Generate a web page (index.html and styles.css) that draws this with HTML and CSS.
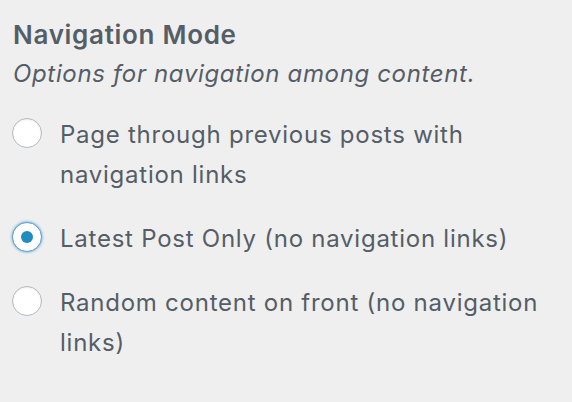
FILE: index.html
```html
<!DOCTYPE html>
<html lang="en">
<head>
<meta charset="utf-8">
<title>Navigation Mode</title>
<link rel="stylesheet" href="styles.css">
</head>
<body>
<div class="control">
  <span class="control-title">Navigation Mode</span>
  <span class="description">Options for navigation among content.</span>
  <div class="options">
    <label class="option">
      <input type="radio" name="nav" class="radio">
      <span class="label-text">Page through previous posts with navigation links</span>
    </label>
    <label class="option">
      <input type="radio" name="nav" class="radio" checked>
      <span class="label-text">Latest Post Only (no navigation links)</span>
    </label>
    <label class="option">
      <input type="radio" name="nav" class="radio">
      <span class="label-text">Random content on front (no navigation links)</span>
    </label>
  </div>
</div>
</body>
</html>
```

FILE: styles.css
```css
html, body {
  margin: 0;
  padding: 0;
  background: #efefef;
}

body {
  font-family: Inter, "Open Sans", "Liberation Sans", sans-serif;
  color: #555d66;
}

.control {
  display: flex;
  flex-direction: column;
  padding: 18px 30px 0 12px;
}

.control-title {
  display: block;
  font-size: 26px;
  font-weight: 600;
  letter-spacing: 0.7px;
  line-height: 34px;
  padding-left: 1px;
}

.description {
  display: block;
  font-size: 24px;
  font-style: italic;
  letter-spacing: 0.65px;
  line-height: 34px;
  margin-top: 5px;
  padding-left: 1px;
}

.options {
  display: flex;
  flex-direction: column;
  gap: 24px;
  margin-top: 24px;
}

.option {
  display: flex;
  align-items: flex-start;
  gap: 18px;
  font-size: 24px;
  letter-spacing: 0.75px;
  line-height: 40px;
}

.radio {
  appearance: none;
  -webkit-appearance: none;
  flex: none;
  width: 30px;
  height: 30px;
  margin: 3px 0 0 0;
  border: 1.5px solid #b4b9be;
  border-radius: 50%;
  background: #fff;
  box-shadow: inset 0 1px 2px rgba(0, 0, 0, 0.07);
  box-sizing: border-box;
  display: grid;
  place-items: center;
}

.radio:checked {
  border-color: #5b9dd9;
  box-shadow: 0 0 3px rgba(30, 140, 190, 0.8);
}

.radio:checked::before {
  content: "";
  width: 12px;
  height: 12px;
  border-radius: 50%;
  background: #1e8cbe;
}

.label-text {
  display: block;
}
```
